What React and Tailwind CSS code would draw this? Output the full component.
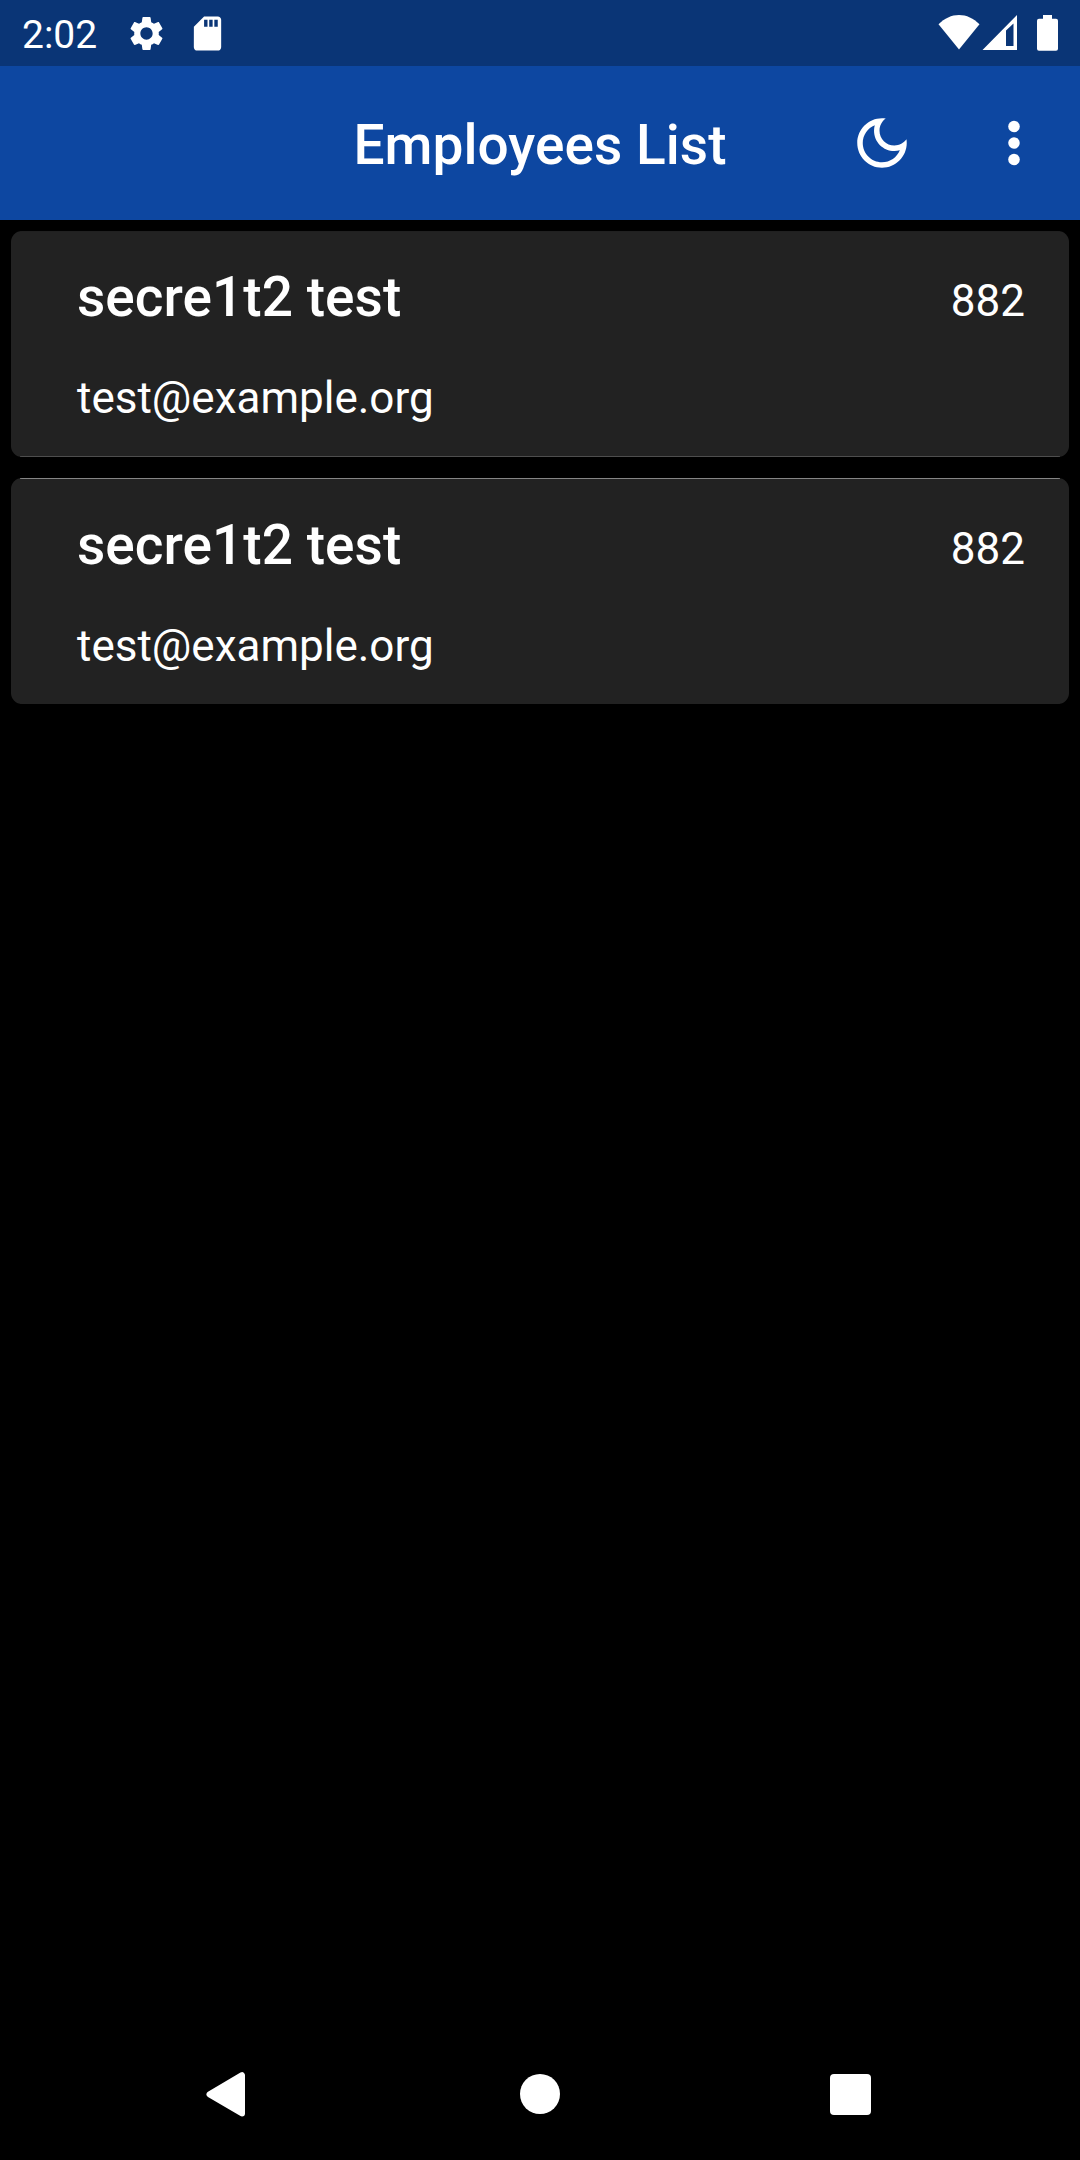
const employees = [
  { id: 1, name: "secre1t2 test", email: "test@example.org", age: "882", topEdge: "bg-[#202020]", bottomEdge: "bg-[#4e4e4e]", inset: "pt-0" },
  { id: 2, name: "secre1t2 test", email: "test@example.org", age: "882", topEdge: "bg-[#858585]", bottomEdge: "bg-[#222222]", inset: "pt-px" },
];

function StatusBar() {
  return (
    <div className="flex h-[66px] shrink-0 items-center bg-[#0a3576] pr-[22px] pl-[22px]">
      <span className="w-[104px] pt-[3px] text-[39px] leading-[66px]">2:02</span>
      <svg className="h-[41px] w-[41px]" viewBox="0 0 24 24" fill="currentColor">
        <path d="M19.14 12.94c.04-.3.06-.61.06-.94 0-.32-.02-.64-.07-.94l2.03-1.58c.18-.14.23-.41.12-.61l-1.92-3.32c-.12-.22-.37-.29-.59-.22l-2.39.96c-.5-.38-1.03-.7-1.62-.94L14.4 2.81c-.04-.24-.24-.41-.48-.41h-3.84c-.24 0-.43.17-.47.41l-.36 2.54c-.59.24-1.13.57-1.62.94l-2.39-.96c-.22-.08-.47 0-.59.22L2.74 8.87c-.12.21-.08.47.12.61l2.03 1.58c-.05.3-.09.63-.09.94s.02.64.07.94l-2.03 1.58c-.18.14-.23.41-.12.61l1.92 3.32c.12.22.37.29.59.22l2.39-.96c.5.38 1.03.7 1.62.94l.36 2.54c.05.24.24.41.48.41h3.84c.24 0 .44-.17.47-.41l.36-2.54c.59-.24 1.13-.56 1.62-.94l2.39.96c.22.08.47 0 .59-.22l1.92-3.32c.12-.22.07-.47-.12-.61l-2.01-1.58zM12 15.6c-1.98 0-3.6-1.62-3.6-3.6s1.62-3.6 3.6-3.6 3.6 1.62 3.6 3.6-1.62 3.6-3.6 3.6z" />
      </svg>
      <svg className="ml-5 h-[41px] w-[41px]" viewBox="0 0 24 24" fill="currentColor">
        <path d="M18 2h-8L4.02 8 4 20c0 1.1.9 2 2 2h12c1.1 0 2-.9 2-2V4c0-1.1-.9-2-2-2zm-6 6h-2V4h2v4zm3 0h-2V4h2v4zm3 0h-2V4h2v4z" />
      </svg>
      <svg className="ml-auto h-[36px] w-[42px]" viewBox="0 0 42 36" fill="currentColor">
        <path d="M0.500 9.300C6.500 3.300 13.500 0 21 0s14.500 3.300 20.500 9.300L21 34.500z" />
      </svg>
      <svg className="ml-[2px] h-[36px] w-[36px]" viewBox="0 0 36 36">
        <path fill="currentColor" fillRule="evenodd" d="M0.500 35L35 0V35zM24 15.500V31H31.500V8.500z" />
      </svg>
      <svg className="ml-[19px] h-[36px] w-[21px]" viewBox="0 0 21 36" fill="currentColor">
        <path d="M6 0h9v3.700h4a2 2 0 0 1 2 2V33.700a2 2 0 0 1-2 2H2a2 2 0 0 1-2-2V5.700a2 2 0 0 1 2-2h4z" />
      </svg>
    </div>
  );
}

function AppBar() {
  return (
    <header className="grid h-[154px] shrink-0 grid-cols-[1fr_auto_1fr] items-center bg-[#0d47a1]">
      <h1 className="col-start-2 pt-[4px] text-[55px] leading-[64px] font-medium tracking-[0.04px]">Employees List</h1>
      <div className="flex justify-end pr-[33px]">
        <button className="mr-[66px]" aria-label="Dark mode">
          <svg className="h-[66px] w-[66px]" viewBox="0 0 24 24" fill="currentColor">
            <path d="M9.370 5.510C9.190 6.150 9.100 6.820 9.100 7.500c0 4.080 3.320 7.400 7.400 7.400.68 0 1.350-.09 1.990-.27C17.450 17.190 14.930 19 12 19c-3.860 0-7-3.140-7-7 0-2.930 1.810-5.450 4.370-6.490zM12 3c-4.970 0-9 4.030-9 9s4.030 9 9 9 9-4.030 9-9c0-.46-.04-.92-.1-1.360-.98 1.370-2.580 2.260-4.400 2.260-2.980 0-5.400-2.420-5.400-5.400 0-1.810.89-3.420 2.260-4.400-.44-.06-.9-.1-1.360-.1z" />
          </svg>
        </button>
        <button aria-label="More options">
          <svg className="h-[66px] w-[66px]" viewBox="0 0 24 24" fill="currentColor">
            <circle cx="12" cy="6" r="2.100" />
            <circle cx="12" cy="12" r="2.100" />
            <circle cx="12" cy="18" r="2.100" />
          </svg>
        </button>
      </div>
    </header>
  );
}

function EmployeeCard({ name, email, age, topEdge, bottomEdge, inset }) {
  return (
    <li className="flex h-[226px] flex-col overflow-hidden rounded-[11px] bg-[#222222]">
      <div className={`mx-[9px] h-px shrink-0 ${topEdge}`} />
      <div className={`flex flex-1 items-start justify-between pr-[44px] pl-[66px] ${inset}`}>
        <div className="pt-[33px]">
          <div className="text-[55px] leading-[64px] font-medium tracking-[0.04px]">{name}</div>
          <div className="mt-[43px] text-[44px] leading-[52px]">{email}</div>
        </div>
        <div className="pt-[43px] text-[44px] leading-[52px]">{age}</div>
      </div>
      <div className={`mx-[9px] h-px shrink-0 ${bottomEdge}`} />
    </li>
  );
}

function NavigationBar() {
  return (
    <nav className="grid h-[132px] shrink-0 grid-cols-[1fr_auto_1fr] items-center pr-[209px] pl-[206px]">
      <svg className="h-[46px] w-[39px]" viewBox="0 0 39 46" fill="currentColor" stroke="currentColor" strokeWidth="6" strokeLinejoin="round">
        <path d="M3.500 23.300L36 4.200V42.500z" />
      </svg>
      <span className="ml-[3px] h-[40px] w-[40px] rounded-full bg-white" />
      <span className="mt-px h-[41px] w-[41px] justify-self-end rounded-[4px] bg-white" />
    </nav>
  );
}

export default function App() {
  return (
    <div className="flex h-[2160px] w-[1080px] flex-col overflow-hidden bg-black font-['Roboto',sans-serif] text-white">
      <StatusBar />
      <AppBar />
      <ul className="flex flex-1 flex-col gap-[21px] p-[11px]">
        {employees.map((employee) => (
          <EmployeeCard key={employee.id} {...employee} />
        ))}
      </ul>
      <NavigationBar />
    </div>
  );
}
